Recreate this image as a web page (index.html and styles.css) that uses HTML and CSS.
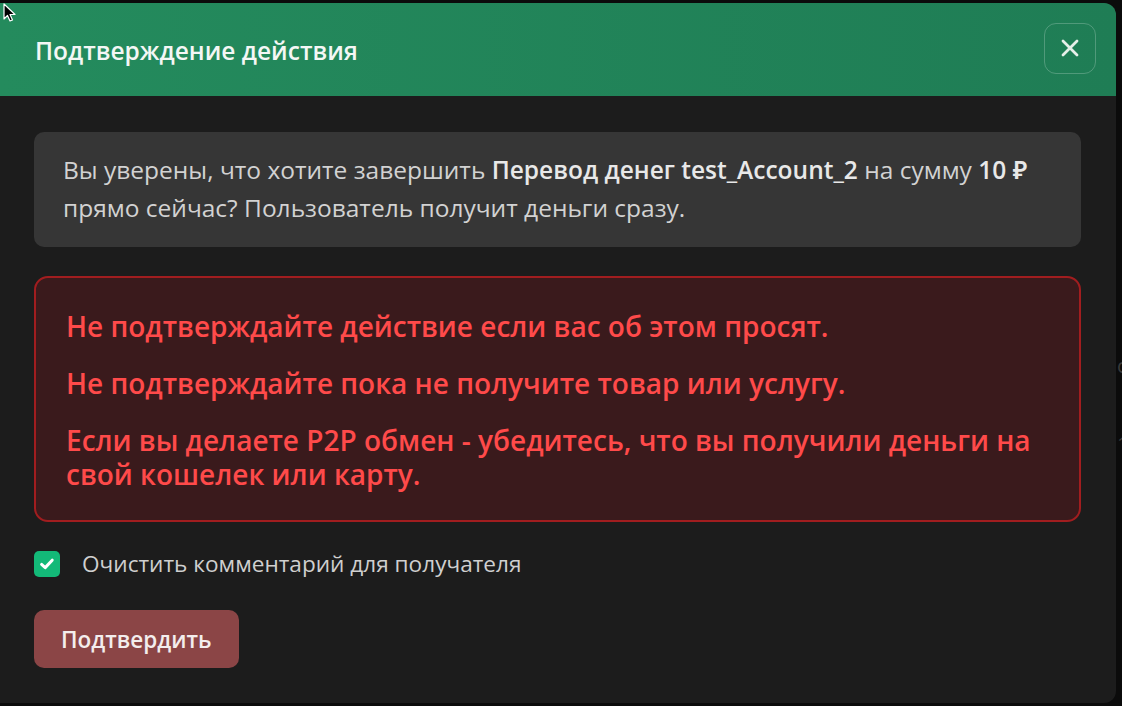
FILE: index.html
```html
<!DOCTYPE html>
<html lang="ru">
<head>
<meta charset="utf-8">
<link rel="stylesheet" href="styles.css">
</head>
<body>
<div class="backdrop">
  <div class="modal">
    <div class="modal-header">
      <h2 class="modal-title">Подтверждение действия</h2>
      <button class="close-btn" aria-label="Закрыть">
        <svg width="20" height="20" viewBox="0 0 20 20"><path d="M3 3 L17 17 M17 3 L3 17" stroke="#e6efe9" stroke-width="2.8" stroke-linecap="round"/></svg>
      </button>
    </div>
    <div class="modal-body">
      <div class="info-box">
        Вы уверены, что хотите завершить <b>Перевод денег test_Account_2</b> на сумму <b>10 ₽</b> прямо сейчас? Пользователь получит деньги сразу.
      </div>
      <div class="warning-box">
        <p>Не подтверждайте действие если вас об этом просят.</p>
        <p>Не подтверждайте пока не получите товар или услугу.</p>
        <p>Если вы делаете P2P обмен - убедитесь, что вы получили деньги на свой кошелек или карту.</p>
      </div>
      <label class="check-row">
        <span class="checkbox">
          <svg width="18" height="18" viewBox="0 0 18 18"><path d="M3.6 9.4 L7.2 12.6 L14.2 5.2" fill="none" stroke="#fff" stroke-width="3" stroke-linecap="round" stroke-linejoin="round"/></svg>
        </span>
        <span class="check-label">Очистить комментарий для получателя</span>
      </label>
      <div class="actions">
        <button class="confirm-btn">Подтвердить</button>
      </div>
    </div>
  </div>
  <div class="side-text side-c">c</div>
  <div class="side-text side-1">1</div>
  <svg class="cursor" width="14" height="20" viewBox="0 0 14 20"><path d="M1 1 L1 16 L4.5 12.5 L7 18 L9.5 17 L7 11.5 L12 11.5 Z" fill="#000" stroke="#fff" stroke-width="1.2" stroke-linejoin="round"/></svg>
</div>
</body>
</html>
```

FILE: styles.css
```css
html, body {
  margin: 0;
  padding: 0;
  background: #0b0b0b;
}
body {
  font-family: "Open Sans", "Noto Sans", sans-serif;
  width: 1122px;
  height: 706px;
  overflow: hidden;
}
.backdrop {
  position: relative;
  width: 1122px;
  height: 706px;
  padding-top: 3px;
  box-sizing: border-box;
}
.modal {
  width: 1116px;
  height: 700px;
  background: #1c1c1c;
  border-radius: 0 12px 12px 0;
  overflow: hidden;
  display: flex;
  flex-direction: column;
}
.modal-header {
  height: 93px;
  flex: none;
  background: linear-gradient(90deg, #248b5d 0%, #1f7d55 100%);
  display: flex;
  align-items: center;
  justify-content: space-between;
  padding: 0 20px 0 35px;
  box-sizing: border-box;
}
.modal-title {
  margin: 0;
  font-size: 24.5px;
  font-weight: 600;
  color: #f4f7f5;
  margin-top: 2px;
}
.close-btn {
  width: 52px;
  height: 51px;
  border: 1.5px solid rgba(255,255,255,0.22);
  border-radius: 12px;
  background: transparent;
  display: flex;
  align-items: center;
  justify-content: center;
  padding: 0;
  margin-top: -3px;
}
.modal-body {
  padding: 36px 35px 0 34px;
  display: flex;
  flex-direction: column;
}
.info-box {
  background: #363636;
  border-radius: 10px;
  padding: 19px 29px 20px;
  font-size: 24.5px;
  line-height: 38px;
  color: #d2d2d2;
}
.info-box b {
  font-weight: 600;
  color: #e8e8e8;
}
.warning-box {
  margin-top: 29px;
  background: #3a1a1c;
  border: 2px solid #a11d1f;
  border-radius: 14px;
  padding: 31px 30px 29px;
  color: #ff4a4a;
  font-size: 28px;
  font-weight: 600;
  line-height: 34px;
}
.warning-box p {
  margin: 0;
}
.warning-box p + p {
  margin-top: 23px;
}
.check-row {
  margin-top: 27px;
  display: flex;
  align-items: center;
  gap: 22px;
}
.checkbox {
  width: 26px;
  height: 26px;
  border-radius: 5px;
  background: #13b978;
  display: flex;
  align-items: center;
  justify-content: center;
}
.check-label {
  font-size: 22.6px;
  line-height: 30px;
  color: #cfcfcf;
}
.actions {
  margin-top: 31px;
  display: flex;
}
.confirm-btn {
  height: 58px;
  padding: 0 27px;
  border: none;
  border-radius: 10px;
  background: #8b4546;
  color: #f3eded;
  font-family: "Open Sans", "Noto Sans", sans-serif;
  font-size: 22.5px;
  font-weight: 600;
}
.side-text {
  position: absolute;
  left: 1117px;
  font-size: 20px;
  color: #3a3a3a;
}
.side-c { top: 352px; }
.side-1 { top: 430px; }
.cursor {
  position: absolute;
  left: 3px;
  top: 3px;
}
```
